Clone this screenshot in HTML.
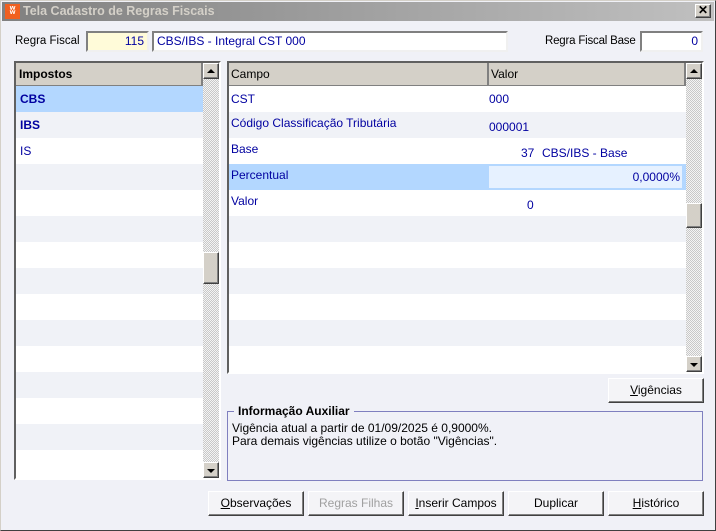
<!DOCTYPE html>
<html><head><meta charset="utf-8"><style>
*{box-sizing:border-box;margin:0;padding:0}
body{width:716px;height:531px;overflow:hidden;background:#d4d0c8;font-family:"Liberation Sans",sans-serif;font-size:12px;color:#000;position:relative}
.a{position:absolute}
#win{left:0;top:0;width:716px;height:531px;border:1px solid #d4d0c8;border-right-color:#404040;border-bottom-color:#404040;background:#f0f1f7}
#title{left:2px;top:2px;width:712px;height:19px;background:linear-gradient(90deg,#808080,#c0c0c0);color:#d4d0c8;font-weight:bold;font-size:12.5px;line-height:19px;padding-left:21px}
.inp{background:#fff;color:#0000a0;line-height:17px;padding:0 3px;height:21px;border:2px solid;border-color:#808080 #f0f0f0 #f0f0f0 #808080}
.grid{background:#fff;border:2px solid;border-color:#606060 #fff #fff #606060;overflow:hidden}
.hdr{background:#d4d0c8;height:23px;line-height:22px;border-bottom:1px solid #808080;position:relative}
.row{height:26px;line-height:22px;color:#0000a0;position:relative}
.row:nth-child(even){background:#f0f2f7}
.sb{background:repeating-conic-gradient(#c8c8c8 0 25%,#f4f4f4 0 50%) 0 0/2px 2px}
.btn3{background:#d4d0c8;border:1px solid;border-color:#fff #404040 #404040 #fff;box-shadow:inset -1px -1px 0 #808080}
.btn{background:#f4f4f7;border:1px solid;border-color:#fff #404040 #404040 #fff;box-shadow:inset -1px -1px 0 #808080;text-align:center;line-height:23px;height:25px;width:96px;top:491px;font-size:12px}
.tri{width:0;height:0;border-left:4px solid transparent;border-right:4px solid transparent;margin:5px auto 0}
</style></head><body>
<div id="win" class="a"></div>
<div id="title" class="a">Tela Cadastro de Regras Fiscais</div>
<div class="a" style="left:5px;top:4px;width:15px;height:15px;background:#f06020;color:#fff;font-size:11px;line-height:15px;text-align:center;font-weight:bold">ʬ</div>
<div class="a btn3" style="left:695px;top:4px;width:16px;height:14px;font-size:12px;line-height:11px;text-align:center;font-weight:bold">✕</div>

<div class="a" style="left:15px;top:35px;font-size:11.5px">Regra Fiscal</div>
<div class="a inp" style="left:86px;top:31px;width:63px;background:#fffbd9;text-align:right">115</div>
<div class="a inp" style="left:152px;top:31px;width:356px">CBS/IBS - Integral CST 000</div>
<div class="a" style="left:545px;top:35px;font-size:11.5px;letter-spacing:-0.2px">Regra Fiscal Base</div>
<div class="a inp" style="left:640px;top:31px;width:63px;text-align:right">0</div>

<div class="a grid" style="left:14px;top:61px;width:207px;height:419px">
 <div class="hdr" style="width:187px;font-weight:bold;padding-left:3px;border-right:2px solid #808080">Impostos</div>
 <div style="width:187px">
  <div class="row" style="background:#b3d7ff;font-weight:bold;padding-left:4px;line-height:26px">CBS</div>
  <div class="row" style="font-weight:bold;padding-left:4px;line-height:26px">IBS</div>
  <div class="row" style="padding-left:4px;line-height:26px">IS</div>
  <div class="row"></div><div class="row"></div><div class="row"></div><div class="row"></div><div class="row"></div><div class="row"></div><div class="row"></div><div class="row"></div><div class="row"></div><div class="row"></div><div class="row"></div><div class="row"></div>
 </div>
</div>
<div class="a sb" style="left:203px;top:63px;width:16px;height:415px"></div>
<div class="a btn3" style="left:203px;top:63px;width:16px;height:16px"><div class="tri" style="border-bottom:4px solid #000"></div></div>
<div class="a btn3" style="left:203px;top:252px;width:16px;height:32px"></div>
<div class="a btn3" style="left:203px;top:462px;width:16px;height:16px"><div class="tri" style="border-top:4px solid #000;margin-top:6px"></div></div>

<div class="a grid" style="left:227px;top:61px;width:477px;height:313px">
 <div class="hdr" style="width:457px">
  <span class="a" style="left:2px">Campo</span>
  <span class="a" style="left:258px;top:0;height:23px;border-left:2px solid #808080;padding-left:2px">Valor</span>
  <span class="a" style="left:455px;top:0;height:23px;border-left:2px solid #808080"></span>
 </div>
 <div style="width:457px">
  <div class="row" style="line-height:26px"><span class="a" style="left:2px">CST</span><span class="a" style="left:260px">000</span></div>
  <div class="row"><span class="a" style="left:2px">Código Classificação Tributária</span><span class="a" style="left:260px;top:4px">000001</span></div>
  <div class="row" style="background:#fff"><span class="a" style="left:2px">Base</span><span class="a" style="left:292px;top:4px">37</span><span class="a" style="left:313px;top:4px">CBS/IBS - Base</span></div>
  <div class="row" style="background:#b3d7ff"><span class="a" style="left:2px">Percentual</span><span class="a" style="left:260px;top:2px;width:193px;height:22px;background:#e6f1ff;text-align:right;padding-right:2px;line-height:22px">0,0000%</span></div>
  <div class="row"><span class="a" style="left:2px">Valor</span><span class="a" style="left:298px;top:4px">0</span></div>
  <div class="row"></div><div class="row"></div><div class="row"></div><div class="row"></div><div class="row"></div><div class="row"></div>
 </div>
</div>
<div class="a sb" style="left:686px;top:63px;width:16px;height:309px"></div>
<div class="a btn3" style="left:686px;top:63px;width:16px;height:16px"><div class="tri" style="border-bottom:4px solid #000"></div></div>
<div class="a btn3" style="left:686px;top:203px;width:16px;height:25px"></div>
<div class="a btn3" style="left:686px;top:356px;width:16px;height:16px"><div class="tri" style="border-top:4px solid #000;margin-top:6px"></div></div>

<div class="a btn" style="left:608px;top:378px"><u>V</u>igências</div>

<div class="a" style="left:227px;top:411px;width:476px;height:70px;border:1px solid #7f7fbf"></div>
<div class="a" style="left:234px;top:404px;padding:0 4px;background:#f0f1f7;font-weight:bold">Informação Auxiliar</div>
<div class="a" style="left:232px;top:422px;line-height:13px">Vigência atual a partir de 01/09/2025 é 0,9000%.<br>Para demais vigências utilize o botão "Vigências".</div>

<div class="a btn" style="left:208px"><u>O</u>bservações</div>
<div class="a btn" style="left:308px;color:#a0a0a0">Regras Filhas</div>
<div class="a btn" style="left:408px"><u>I</u>nserir Campos</div>
<div class="a btn" style="left:508px">Duplicar</div>
<div class="a btn" style="left:608px"><u>H</u>istórico</div>
</body></html>
